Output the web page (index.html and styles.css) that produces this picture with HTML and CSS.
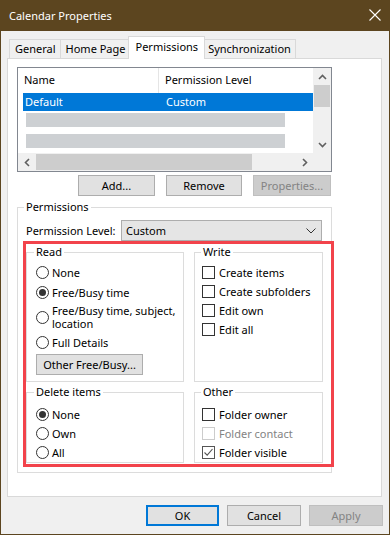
FILE: index.html
```html
<!DOCTYPE html>
<html>
<head>
    <meta charset="UTF-8">
    <meta name="viewport" content="width=device-width, initial-scale=1.0">
    <title>Calendar Properties</title>
    <link rel="stylesheet" href="styles.css">
</head>
<body>
<div class="window">
    <!-- Title bar -->
    <div class="titlebar">
        <span class="title">Calendar Properties</span>
        <svg class="close" width="12" height="12" viewBox="0 0 12 12">
            <path d="M0.5 0.5 L11.5 11.5 M11.5 0.5 L0.5 11.5" stroke="#fff" stroke-width="1.1" fill="none"/>
        </svg>
    </div>

    <div class="client">
        <!-- Tabs -->
        <div class="tabs">
            <div class="tab">General</div>
            <div class="tab">Home Page</div>
            <div class="tab active">Permissions</div>
            <div class="tab">Synchronization</div>
        </div>

        <div class="panel">
            <!-- Permission list -->
            <div class="listbox">
                <div class="list-top">
                    <div class="list-main">
                        <div class="list-header">
                            <div class="col-name">Name</div>
                            <div class="col-level">Permission Level</div>
                        </div>
                        <div class="list-row selected">
                            <div class="col-name">Default</div>
                            <div class="col-level">Custom</div>
                        </div>
                        <div class="list-bar"></div>
                        <div class="list-bar"></div>
                    </div>
                    <div class="vscroll">
                        <div class="arrow">
                            <svg width="9" height="6" viewBox="0 0 9 6"><path d="M1 5 L4.5 1.5 L8 5" stroke="#606060" stroke-width="1.6" fill="none"/></svg>
                        </div>
                        <div class="vthumb"></div>
                        <div class="vspace"></div>
                        <div class="arrow">
                            <svg width="9" height="6" viewBox="0 0 9 6"><path d="M1 1 L4.5 4.5 L8 1" stroke="#606060" stroke-width="1.6" fill="none"/></svg>
                        </div>
                    </div>
                </div>
                <div class="list-bottom">
                    <div class="hscroll">
                        <div class="harrow">
                            <svg width="6" height="9" viewBox="0 0 6 9"><path d="M5 1 L1.5 4.5 L5 8" stroke="#606060" stroke-width="1.6" fill="none"/></svg>
                        </div>
                        <div class="hthumb"></div>
                        <div class="hspace"></div>
                        <div class="harrow">
                            <svg width="6" height="9" viewBox="0 0 6 9"><path d="M1 1 L4.5 4.5 L1 8" stroke="#606060" stroke-width="1.6" fill="none"/></svg>
                        </div>
                    </div>
                    <div class="corner"></div>
                </div>
            </div>

            <!-- List buttons -->
            <div class="list-buttons">
                <div class="button btn-add">Add...</div>
                <div class="button btn-remove">Remove</div>
                <div class="button btn-props disabled">Properties...</div>
            </div>

            <!-- Permissions group -->
            <fieldset class="group outer">
                <legend>Permissions</legend>
                <div class="level-row">
                    <span>Permission Level:</span>
                    <div class="combo">
                        <span>Custom</span>
                        <svg width="10" height="6" viewBox="0 0 10 6"><path d="M0.5 0.5 L5 5 L9.5 0.5" stroke="#333" stroke-width="1" fill="none"/></svg>
                    </div>
                </div>

                <div class="highlight">
                    <fieldset class="group read">
                        <legend>Read</legend>
                        <div class="option tall"><span class="radio"></span>None</div>
                        <div class="option tall"><span class="radio checked"></span>Free/Busy time</div>
                        <div class="option tall two-line"><span class="radio"></span><span>Free/Busy time, subject,<br>location</span></div>
                        <div class="option tall spaced"><span class="radio"></span>Full Details</div>
                        <div class="button btn-other">Other Free/Busy...</div>
                    </fieldset>

                    <fieldset class="group write">
                        <legend>Write</legend>
                        <div class="option"><span class="check"></span>Create items</div>
                        <div class="option"><span class="check"></span>Create subfolders</div>
                        <div class="option"><span class="check"></span>Edit own</div>
                        <div class="option"><span class="check"></span>Edit all</div>
                    </fieldset>

                    <fieldset class="group delete">
                        <legend>Delete items</legend>
                        <div class="option"><span class="radio checked"></span>None</div>
                        <div class="option"><span class="radio"></span>Own</div>
                        <div class="option"><span class="radio"></span>All</div>
                    </fieldset>

                    <fieldset class="group other">
                        <legend>Other</legend>
                        <div class="option"><span class="check"></span>Folder owner</div>
                        <div class="option disabled"><span class="check"></span>Folder contact</div>
                        <div class="option"><span class="check checked">
                            <svg width="11" height="11" viewBox="0 0 11 11"><path d="M1.5 5.5 L4.2 8.2 L9.5 2" stroke="#555" stroke-width="1.1" fill="none"/></svg>
                        </span>Folder visible</div>
                    </fieldset>
                </div>
            </fieldset>
        </div>

        <!-- Dialog buttons -->
        <div class="dialog-buttons">
            <div class="button default">OK</div>
            <div class="button">Cancel</div>
            <div class="button disabled">Apply</div>
        </div>
    </div>
</div>
</body>
</html>
```

FILE: styles.css
```css
/* Page and window frame */
html, body {
    margin: 0;
    background: #f0f0f0;
}

body {
    font-family: "Noto Sans", "Open Sans", sans-serif;
    font-size: 11px;
    color: #000;
}

.window {
    width: 390px;
    height: 535px;
    box-sizing: border-box;
    border: 1px solid #5c451f;
    border-top: none;
    background: #f0f0f0;
    display: flex;
    flex-direction: column;
    overflow: hidden;
}

/* Title bar */
.titlebar {
    height: 31px;
    flex: none;
    background: #5c451f;
    color: #fff;
    display: flex;
    align-items: center;
    padding-left: 8px;
    font-size: 11px;
}

.title {
    flex: 1;
    margin-top: -1px;
}

.close {
    margin-right: 8px;
    margin-top: -1px;
}

/* Tabs */
.tabs {
    display: flex;
    align-items: flex-end;
    height: 22px;
    margin-top: 5px;
    padding-left: 8px;
}

.tab {
    height: 18px;
    line-height: 18px;
    padding: 0 4px 0 5px;
    border: 1px solid #d9d9d9;
    border-bottom: none;
    margin-left: -1px;
    background: #f0f0f0;
}

.tab:first-child {
    margin-left: 0;
}

.tab.active {
    height: 22px;
    line-height: 20px;
    background: #fff;
    margin: 0 -2px -1px -3px;
    padding: 0 6px 0 7px;
    position: relative;
    z-index: 1;
}

/* Tab panel */
.panel {
    width: 375px;
    height: 439px;
    box-sizing: border-box;
    margin-left: 6px;
    border: 1px solid #d9d9d9;
    background: #fff;
    padding: 8px 0 0 9px;
}

/* List view */
.listbox {
    width: 315px;
    height: 105px;
    box-sizing: border-box;
    border: 1px solid #828790;
    display: flex;
    flex-direction: column;
}

.list-top {
    display: flex;
    height: 85px;
}

.list-main {
    flex: 1;
}

.list-header {
    display: flex;
    height: 25px;
    line-height: 24px;
}

.list-header .col-name {
    width: 134px;
    padding-left: 6px;
    border-right: 1px solid #e5e5e5;
}

.list-header .col-level {
    padding-left: 6px;
}

.list-row {
    display: flex;
    height: 18px;
    line-height: 17px;
    margin-left: 5px;
}

.list-row.selected {
    background: #0078d7;
    color: #fff;
}

.list-row .col-name {
    width: 139px;
    padding-left: 2px;
}

.list-row .col-level {
    padding-left: 2px;
}

.list-bar {
    width: 259px;
    height: 14px;
    margin: 2px 0 0 8px;
    background: #cdd0d3;
}

.list-bar + .list-bar {
    margin-top: 7px;
}

.vscroll {
    width: 18px;
    background: #f0f0f0;
    display: flex;
    flex-direction: column;
    align-items: center;
}

.arrow {
    height: 17px;
    width: 18px;
    display: flex;
    align-items: center;
    justify-content: center;
}

.vthumb {
    width: 16px;
    height: 22px;
    background: #cdcdcd;
}

.vspace {
    flex: 1;
}

.list-bottom {
    display: flex;
    height: 18px;
}

.hscroll {
    flex: 1;
    display: flex;
    align-items: center;
    background: #f0f0f0;
}

.harrow {
    width: 17px;
    height: 18px;
    display: flex;
    align-items: center;
    justify-content: center;
}

.hthumb {
    width: 216px;
    height: 16px;
    margin-left: 1px;
    background: #cdcdcd;
}

.hspace {
    flex: 1;
}

.corner {
    width: 18px;
    background: #f0f0f0;
}

/* Buttons */
.button {
    height: 21px;
    box-sizing: border-box;
    border: 1px solid #adadad;
    background: #e1e1e1;
    display: flex;
    align-items: center;
    justify-content: center;
}

.button.disabled {
    background: #cccccc;
    border-color: #bfbfbf;
    color: #838383;
}

.button.default {
    border: 2px solid #0078d7;
}

.list-buttons {
    display: flex;
    justify-content: flex-end;
    gap: 11px;
    width: 314px;
    margin-top: 3px;
}

.btn-add {
    width: 77px;
}

.btn-remove {
    width: 76px;
}

.btn-props {
    width: 78px;
}

/* Group boxes */
.group {
    margin: 0;
    min-inline-size: 0;
    border: 1px solid #dcdcdc;
    padding: 0;
}

.group legend {
    padding: 0 2px;
    margin-left: -2px;
    line-height: 16px;
}

.outer {
    width: 315px;
    box-sizing: border-box;
    margin-top: 3px;
    padding: 0 9px 5px 8px;
}

.level-row {
    display: flex;
    align-items: center;
    justify-content: space-between;
    margin-top: 5px;
}

.combo {
    width: 201px;
    height: 21px;
    box-sizing: border-box;
    border: 1px solid #adadad;
    background: #e5e5e5;
    display: flex;
    align-items: center;
    justify-content: space-between;
    padding: 0 5px 0 4px;
}

/* Red highlight around the permission groups */
.highlight {
    width: 311px;
    box-sizing: border-box;
    margin-left: -3px;
    border: 3px solid #f2434b;
    padding: 0 8px 1px 0;
    display: grid;
    grid-template-columns: 158px 129px;
    grid-template-rows: 138px 79px;
    column-gap: 10px;
    row-gap: 2px;
}

.read {
    padding: 2px 0 6px 9px;
}

.write {
    padding: 3px 0 0 7px;
}

.delete {
    padding: 5px 0 0 9px;
}

.other {
    padding: 5px 0 0 7px;
}

.write legend, .other legend {
    margin-left: -1px;
}

.option {
    display: flex;
    align-items: center;
    height: 19px;
}

.option.tall {
    height: 20px;
}

.option.two-line {
    height: 26px;
    line-height: 13px;
    margin-top: 2px;
}

.option.spaced {
    margin-top: 2px;
}

.option.disabled {
    color: #838383;
}

.radio {
    width: 13px;
    height: 13px;
    box-sizing: border-box;
    border: 1px solid #333;
    border-radius: 50%;
    background: #fff;
    margin-right: 3px;
    flex: none;
    display: flex;
    align-items: center;
    justify-content: center;
}

.radio.checked::after {
    content: "";
    width: 7px;
    height: 7px;
    border-radius: 50%;
    background: #333;
}

.check {
    width: 13px;
    height: 13px;
    box-sizing: border-box;
    border: 1px solid #333;
    background: #fff;
    margin-right: 4px;
    flex: none;
    display: flex;
    align-items: center;
    justify-content: center;
}

.option.disabled .check {
    border-color: #cccccc;
}

.check.checked {
    border-color: #555;
}

.btn-other {
    width: 107px;
    margin-top: 2px;
}

/* Dialog buttons */
.dialog-buttons {
    display: flex;
    justify-content: flex-end;
    gap: 8px;
    margin-top: 8px;
    padding-right: 6px;
}

.dialog-buttons .button {
    width: 74px;
}

.dialog-buttons .button.default {
    width: 73px;
}
```
